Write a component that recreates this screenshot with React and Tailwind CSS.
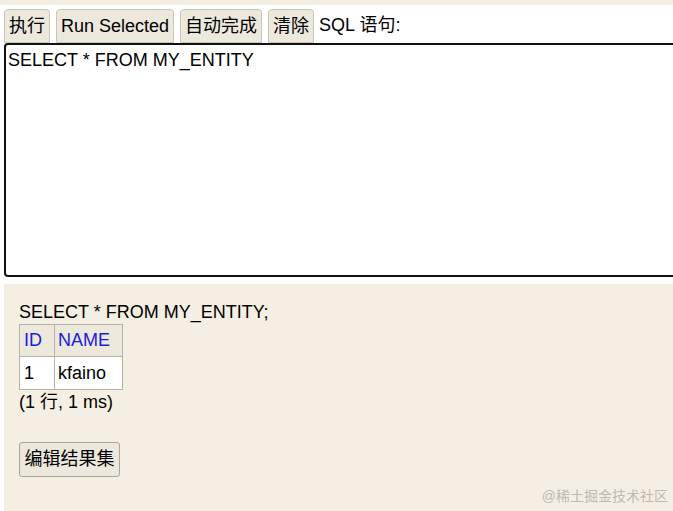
import React from "react";

const font = { fontFamily: '"Liberation Sans", Arial, "Noto Sans CJK SC", sans-serif' };

function TopButton({ children }) {
  return (
    <button className="h-[34px] px-[4px] bg-[#ece9dc] border border-[#c9c6b8] rounded-t-[4px] rounded-b-none text-[18px] text-black leading-none">
      {children}
    </button>
  );
}

export default function App() {
  return (
    <div
      className="w-[673px] h-[511px] overflow-hidden bg-white flex flex-col"
      style={font}
    >
      <div className="h-[5px] bg-[#f4efe2] shrink-0" />
      <div className="flex items-end gap-[6px] pl-[4px] pt-[4px] shrink-0">
        <TopButton>执行</TopButton>
        <TopButton>Run Selected</TopButton>
        <TopButton>自动完成</TopButton>
        <TopButton>清除</TopButton>
        <span className="text-[18px] text-black self-center pb-[2px] -ml-[1px]">SQL 语句:</span>
      </div>
      <div className="ml-[4px] w-[690px] h-[234px] border-2 border-[#111] rounded-l-[4px] shrink-0 pl-[2px] pt-[4px]">
        <div className="text-[18px] leading-[22px] text-black">SELECT * FROM MY_ENTITY</div>
      </div>
      <div className="ml-[4px] mt-[7px] flex-1 bg-[#f4efe2] pl-[15px] pt-[17px] relative">
        <div className="text-[18px] leading-[22px] text-black">SELECT * FROM MY_ENTITY;</div>
        <table className="border-collapse mt-[1px] text-[18px] text-black">
          <tbody>
            <tr className="bg-[#ece9dc] h-[32px]">
              <td className="border border-[#b5b2a6] pl-[4px] pr-[12px] text-[#1c1cd9]">ID</td>
              <td className="border border-[#b5b2a6] pl-[3px] pr-[12px] text-[#1c1cd9]">NAME</td>
            </tr>
            <tr className="bg-white h-[33px]">
              <td className="border border-[#b5b2a6] pl-[4px] pr-[12px]">1</td>
              <td className="border border-[#b5b2a6] pl-[3px] pr-[12px]">kfaino</td>
            </tr>
          </tbody>
        </table>
        <div className="text-[18px] leading-[22px] text-black mt-[1px]">(1 行, 1 ms)</div>
        <button className="mt-[29px] h-[35px] w-[101px] bg-[#ece9dc] border border-[#a9a69a] rounded-[3px] text-[18px] text-black">
          编辑结果集
        </button>
        <div className="absolute right-[5px] bottom-[4px] text-[14px] text-[#bcbab4]">@稀土掘金技术社区</div>
      </div>
    </div>
  );
}
